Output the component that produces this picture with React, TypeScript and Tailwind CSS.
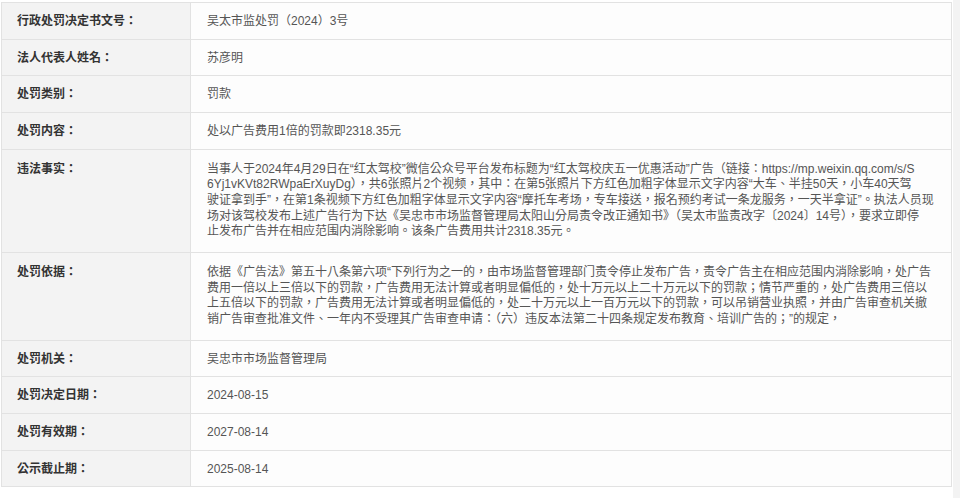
const rows = [
  { label: "行政处罚决定书文号：", lines: ["吴太市监处罚（2024）3号"] },
  { label: "法人代表人姓名：", lines: ["苏彦明"] },
  { label: "处罚类别：", lines: ["罚款"] },
  { label: "处罚内容：", lines: ["处以广告费用1倍的罚款即2318.35元"] },
  {
    label: "违法事实：",
    lines: [
      "当事人于2024年4月29日在“红太驾校”微信公众号平台发布标题为“红太驾校庆五一优惠活动”广告（链接：https://mp.weixin.qq.com/s/S",
      "6Yj1vKVt82RWpaErXuyDg），共6张照片2个视频，其中：在第5张照片下方红色加粗字体显示文字内容“大车、半挂50天，小车40天驾",
      "驶证拿到手”，在第1条视频下方红色加粗字体显示文字内容“摩托车考场，专车接送，报名预约考试一条龙服务，一天半拿证”。执法人员现",
      "场对该驾校发布上述广告行为下达《吴忠市市场监督管理局太阳山分局责令改正通知书》（吴太市监责改字〔2024〕14号），要求立即停",
      "止发布广告并在相应范围内消除影响。该条广告费用共计2318.35元。",
    ],
  },
  {
    label: "处罚依据：",
    lines: [
      "依据《广告法》第五十八条第六项“下列行为之一的，由市场监督管理部门责令停止发布广告，责令广告主在相应范围内消除影响，处广告",
      "费用一倍以上三倍以下的罚款，广告费用无法计算或者明显偏低的，处十万元以上二十万元以下的罚款；情节严重的，处广告费用三倍以",
      "上五倍以下的罚款，广告费用无法计算或者明显偏低的，处二十万元以上一百万元以下的罚款，可以吊销营业执照，并由广告审查机关撤",
      "销广告审查批准文件、一年内不受理其广告审查申请：（六）违反本法第二十四条规定发布教育、培训广告的；”的规定，",
    ],
  },
  { label: "处罚机关：", lines: ["吴忠市市场监督管理局"] },
  { label: "处罚决定日期：", lines: ["2024-08-15"] },
  { label: "处罚有效期：", lines: ["2027-08-14"] },
  { label: "公示截止期：", lines: ["2025-08-14"] },
];

export default function App() {
  return (
    <div className="flex min-h-screen bg-white text-[12px] leading-[15.67px] [font-family:'Liberation_Sans','Noto_Sans_CJK_TC',sans-serif]">
      <div className="pl-[1px] pt-[2px]">
        <div className="w-[951px] border border-[#e2e2e2]">
          {rows.map((row, index) => {
            const multi = row.lines.length > 1;

            return (
              <div
                key={row.label}
                className={`flex ${index > 0 ? "border-t border-[#e2e2e2]" : ""}`}
              >
                <div
                  className={`w-[189px] shrink-0 border-r border-[#e2e2e2] bg-[#f3f3f3] pl-[15px] font-bold text-[#333] ${
                    multi ? "pt-[12px]" : "pt-[11px]"
                  }`}
                >
                  {row.label}
                </div>
                <div
                  className={`flex-1 bg-[#fdfdfd] pl-4 text-[#555] ${
                    multi ? "pt-[12px] pb-[12px]" : "pt-[11px] pb-[9px]"
                  }`}
                >
                  {row.lines.map((line) => (
                    <div key={line} className="whitespace-nowrap">
                      {line}
                    </div>
                  ))}
                </div>
              </div>
            );
          })}
        </div>
      </div>
      <div className="ml-auto w-[7px] bg-[#f3f3f3]" />
    </div>
  );
}
